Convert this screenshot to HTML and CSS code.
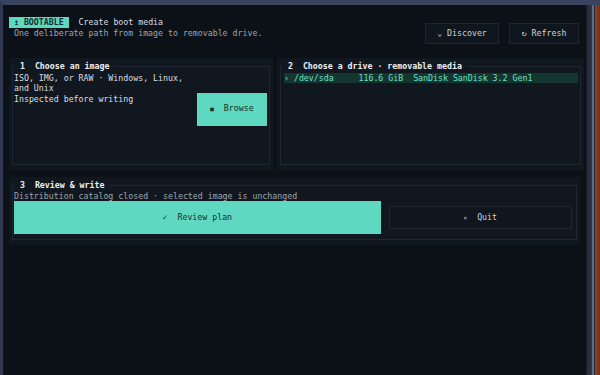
FILE: index.html
```html
<!DOCTYPE html>
<html lang="en">
<head>
    <meta charset="UTF-8">
    <title>Bootable</title>
    <meta name="viewport" content="width=device-width, initial-scale=1">
    <link rel="stylesheet" href="styles.css">
</head>
<body>
    <div class="window">
        <main class="screen">
            <header class="top">
                <div class="intro">
                    <div class="title-row">
                        <span class="badge"> ↥ BOOTABLE </span>
                        <span class="heading">Create boot media</span>
                    </div>
                    <p class="lede">One deliberate path from image to removable drive.</p>
                </div>
                <div class="actions">
                    <button class="ghost discover">⌄ Discover</button>
                    <button class="ghost refresh">↻ Refresh</button>
                </div>
            </header>

            <section class="steps">
                <div class="panel">
                    <fieldset>
                        <legend>1  Choose an image</legend>
                        <div class="image-body">
                            <div class="image-text">
                                <p>ISO, IMG, or RAW · Windows, Linux, and Unix</p>
                                <p>Inspected before writing</p>
                            </div>
                            <button class="solid browse"><span class="ico">■</span>  Browse</button>
                        </div>
                    </fieldset>
                </div>

                <div class="panel">
                    <fieldset>
                        <legend>2  Choose a drive · removable media</legend>
                        <ul class="drives">
                            <li class="drive selected">› /dev/sda     116.6 GiB  SanDisk SanDisk 3.2 Gen1</li>
                        </ul>
                    </fieldset>
                </div>
            </section>

            <section class="panel review">
                <fieldset>
                    <legend>3  Review &amp; write</legend>
                    <p class="note">Distribution catalog closed · selected image is unchanged</p>
                    <div class="review-actions">
                        <button class="solid plan">✓  Review plan</button>
                        <button class="ghost quit"><span class="ico">×</span>  Quit</button>
                    </div>
                </fieldset>
            </section>
        </main>
        <div class="rail"></div>
    </div>
</body>
</html>
```

FILE: styles.css
```css
:root {
    --page: #0c1118;
    --panel: #11171f;
    --line: #1e2631;
    --text: #d9dee4;
    --muted: #9ca5b0;
    --title: #eef1f4;
    --teal: #5ed8c0;
    --teal-ink: #15302b;
    --pick-bg: #153630;
    --pick-text: #6fe0c6;
}

* {
    box-sizing: border-box;
}

html, body {
    margin: 0;
    height: 100%;
    background: var(--page);
}

body {
    font-family: "DejaVu Sans Mono", "Liberation Mono", monospace;
    font-size: 8.25px;
    line-height: 10.5px;
    color: var(--text);
    overflow: hidden;
}

p {
    margin: 0;
}

button {
    font: inherit;
    cursor: pointer;
    white-space: pre;
}

.window {
    display: flex;
    height: 375px;
    border-top: 5px solid #394360;
    border-left: 3px solid #2f3850;
}

.screen {
    flex: 1;
    min-width: 0;
    background: var(--page);
    border-right: 1px solid #1a2029;
}

.rail {
    width: 13px;
    background: linear-gradient(to right, #262c36 0, #2f3542 5px, #5f6c88 5px, #5f6c88 7px, #232836 7px, #232836 8px, #8a4526 8px, #6e3319 13px);
}

/* header */

.top {
    display: flex;
    justify-content: space-between;
    align-items: flex-start;
    padding: 12px 7px 0 6px;
    height: 53px;
}

.title-row {
    display: flex;
    gap: 10px;
    white-space: pre;
}

.badge {
    background: var(--teal);
    color: var(--teal-ink);
    font-weight: bold;
}

.heading {
    color: var(--text);
}

.lede {
    color: var(--muted);
    padding-left: 5px;
}

.actions {
    display: flex;
    gap: 10px;
    margin-top: 6px;
}

.ghost {
    background: #10161e;
    color: #cdd2d9;
    border: 1px solid var(--line);
    height: 21px;
    padding: 0;
}

.discover {
    width: 74px;
}

.refresh {
    width: 70px;
}

.solid {
    background: var(--teal);
    color: var(--teal-ink);
    border: 0;
    padding: 0;
}

/* panels */

.steps {
    display: grid;
    grid-template-columns: 264px 1fr;
    gap: 4px;
    padding: 0 2px 0 6px;
}

.panel {
    background: var(--panel);
    padding: 3px 3px 5px;
}

.panel fieldset {
    margin: 0;
    padding: 0 1px 0 1px;
    border: 1px solid var(--line);
    min-width: 0;
    height: 100%;
}

.panel legend {
    padding: 0 5px;
    margin-left: 1px;
    white-space: pre;
    font-weight: bold;
    color: var(--title);
}

.steps .panel {
    height: 112px;
}

.image-body {
    display: flex;
    gap: 2px;
    padding-top: 1px;
}

.image-text {
    flex: 1;
}

.browse {
    width: 70px;
    height: 33px;
    margin-top: 20px;
    margin-right: 1px;
}

.ico {
    font-size: 6px;
}

.drives {
    list-style: none;
    margin: 0;
    padding: 1px 1px 0 2px;
}

.drive {
    white-space: pre;
}

.selected {
    background: var(--pick-bg);
    color: var(--pick-text);
}

/* review */

.review {
    margin: 7px 6px 0 6px;
    height: 68px;
}

.note {
    color: var(--muted);
    white-space: pre;
}

.review-actions {
    display: grid;
    grid-template-columns: 2fr 1fr;
    gap: 8px;
    padding-right: 3px;
}

.plan {
    height: 33px;
}

.quit {
    height: 23px;
    margin-top: 5px;
}
```
